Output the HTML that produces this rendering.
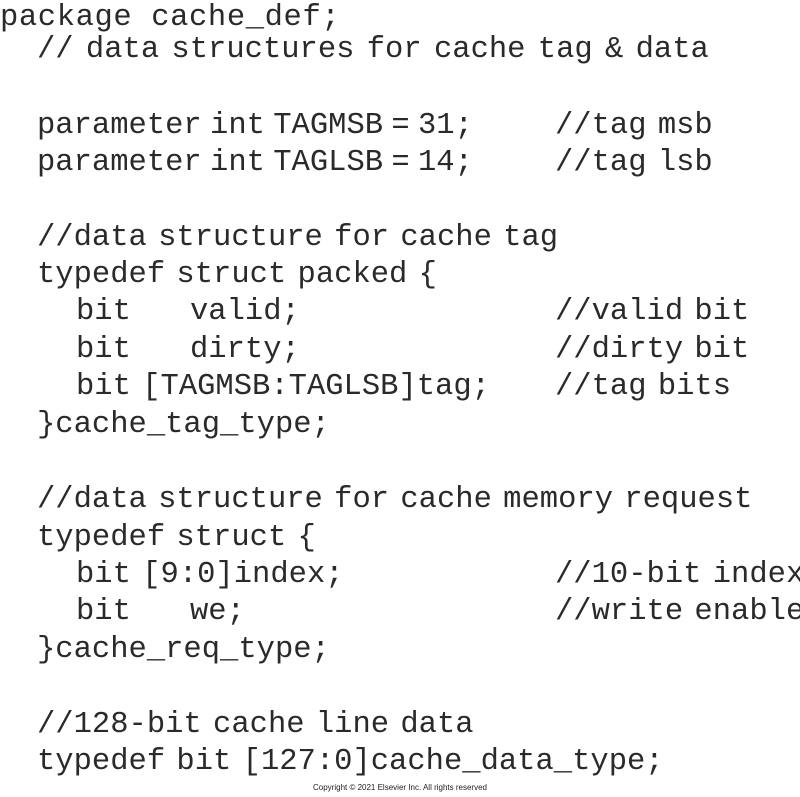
<!DOCTYPE html>
<html><head><meta charset="utf-8"><style>
html,body{margin:0;padding:0;background:#fff;}
body{width:800px;height:797px;position:relative;overflow:hidden;}
.l{position:absolute;font-family:"Liberation Mono",monospace;font-size:30.5px;color:#2a2a2a;white-space:pre;line-height:38px;word-spacing:-7px;}
.c{position:absolute;left:0;right:0;top:783px;text-align:center;font-family:"Liberation Sans",sans-serif;font-size:8px;color:#222;}
</style></head><body>
<div class="l" style="left:0;top:-1px;word-spacing:0;letter-spacing:0.6px">package cache_def;</div>
<div class="l" style="left:37px;top:31px;word-spacing:-6px">// data structures for cache tag &amp; data</div>
<div class="l" style="left:37px;top:107px;word-spacing:-10px">parameter int TAGMSB = 31;</div>
<div class="l" style="left:555px;top:107px">//tag msb</div>
<div class="l" style="left:37px;top:144px;word-spacing:-10px">parameter int TAGLSB = 14;</div>
<div class="l" style="left:555px;top:144px">//tag lsb</div>
<div class="l" style="left:37px;top:219px">//data structure for cache tag</div>
<div class="l" style="left:37px;top:256px">typedef struct packed {</div>
<div class="l" style="left:76px;top:293px">bit</div>
<div class="l" style="left:190px;top:293px">valid;</div>
<div class="l" style="left:555px;top:293px">//valid bit</div>
<div class="l" style="left:76px;top:331px">bit</div>
<div class="l" style="left:190px;top:331px">dirty;</div>
<div class="l" style="left:555px;top:331px">//dirty bit</div>
<div class="l" style="left:76px;top:368px">bit [TAGMSB:TAGLSB]tag;</div>
<div class="l" style="left:555px;top:368px">//tag bits</div>
<div class="l" style="left:37px;top:406px">}cache_tag_type;</div>
<div class="l" style="left:37px;top:481px">//data structure for cache memory request</div>
<div class="l" style="left:37px;top:519px">typedef struct {</div>
<div class="l" style="left:76px;top:556px">bit [9:0]index;</div>
<div class="l" style="left:555px;top:556px">//10-bit index</div>
<div class="l" style="left:76px;top:593px">bit</div>
<div class="l" style="left:190px;top:593px">we;</div>
<div class="l" style="left:555px;top:593px">//write enable</div>
<div class="l" style="left:37px;top:631px">}cache_req_type;</div>
<div class="l" style="left:37px;top:706px">//128-bit cache line data</div>
<div class="l" style="left:37px;top:743px">typedef bit [127:0]cache_data_type;</div>
<div class="c">Copyright © 2021 Elsevier Inc. All rights reserved</div>
</body></html>
